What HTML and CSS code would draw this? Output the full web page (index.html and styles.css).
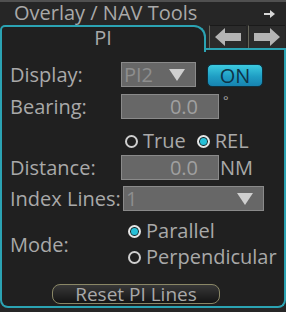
FILE: index.html
```html
<!DOCTYPE html>
<html lang="en">
<head>
    <meta charset="UTF-8">
    <title>Overlay / NAV Tools</title>
    <link rel="stylesheet" href="styles.css">
</head>
<body>
<div class="dialog">
    <div class="dialog__topline"></div>
    <div class="dialog__header">
        <span class="dialog__title">Overlay / NAV Tools</span>
        <svg class="dialog__more" width="11" height="8" viewBox="0 0 11 8">
            <path d="M0 3h6V0l5 4-5 4V5H0z" fill="#d8d8d8"/>
        </svg>
    </div>
    <div class="tabs">
        <div class="tab tab--active">PI</div>
        <div class="tabs__rest">
            <span class="tabs__btn">
                <svg width="26" height="18" viewBox="0 0 26 18"><path d="M0 9l10-9v5h16v8H10v5z" fill="#b4b4b4"/></svg>
            </span>
            <span class="tabs__btn">
                <svg width="26" height="18" viewBox="0 0 26 18"><path d="M26 9L16 0v5H0v8h16v5z" fill="#b4b4b4"/></svg>
            </span>
        </div>
    </div>
    <div class="panel">
        <div class="row row--display">
            <span class="row__label">Display:</span>
            <span class="select select--short">PI2<i class="select__arrow"></i></span>
            <span class="btn-on">ON</span>
        </div>
        <div class="row row--bearing">
            <span class="row__label">Bearing:</span>
            <span class="field">0.0</span>
            <span class="unit unit--deg">°</span>
        </div>
        <div class="row row--ref">
            <span class="radio"></span><span class="radio__text">True</span>
            <span class="radio radio--on"></span><span class="radio__text">REL</span>
        </div>
        <div class="row row--distance">
            <span class="row__label">Distance:</span>
            <span class="field">0.0</span>
            <span class="unit">NM</span>
        </div>
        <div class="row row--index">
            <span class="row__label">Index Lines:</span>
            <span class="select select--long">1<i class="select__arrow"></i></span>
        </div>
        <div class="row row--mode">
            <span class="row__label">Mode:</span>
            <div class="mode">
                <div class="mode__item"><span class="radio radio--on"></span><span class="radio__text">Parallel</span></div>
                <div class="mode__item"><span class="radio"></span><span class="radio__text">Perpendicular</span></div>
            </div>
        </div>
        <div class="row row--reset">
            <span class="btn-reset">Reset PI Lines</span>
        </div>
    </div>
</div>
</body>
</html>
```

FILE: styles.css
```css
html, body {
    margin: 0;
    padding: 0;
    background: #1c1c1c;
}
body {
    width: 286px;
    height: 312px;
    overflow: hidden;
    font-family: "Open Sans", "Noto Sans", sans-serif;
    color: #a9a9a9;
}
.dialog {
    width: 286px;
    height: 312px;
    background: #262626;
}
.dialog__topline {
    height: 2px;
    background: #505050;
}
.dialog__header {
    height: 23px;
    display: flex;
    align-items: center;
    justify-content: space-between;
    padding: 0 11px 0 14px;
}
.dialog__title {
    font-size: 20px;
    line-height: 23px;
    color: #a9a9a9;
    margin-top: -2px;
}
.dialog__more {
    display: block;
    margin-top: 1px;
}

.tabs {
    display: flex;
    height: 25px;
}
.tab {
    box-sizing: border-box;
    width: 206px;
    height: 27px;
    border: 2px solid #2ba3b3;
    border-bottom: none;
    border-radius: 5px 12px 0 0;
    background: #202020;
    text-align: center;
    font-size: 20px;
    line-height: 21px;
    color: #a9a9a9;
    position: relative;
    z-index: 1;
}
.tabs__rest {
    flex: 1;
    display: flex;
    gap: 2px;
    padding-left: 3px;
    border-bottom: 2px solid #2ba3b3;
}
.tabs__btn {
    box-sizing: border-box;
    width: 37px;
    height: 23px;
    display: flex;
    align-items: center;
    justify-content: center;
    background: #2b2b2b;
    border-left: 1px solid #66665a;
    border-top: 1px solid #1a1a1a;
}

.panel {
    box-sizing: border-box;
    height: 260px;
    margin-top: -2px;
    border: 2px solid #2ba3b3;
    border-top: none;
    border-radius: 0 0 8px 8px;
    background: #202020;
    padding-top: 14px;
}
.row {
    display: flex;
    align-items: center;
    font-size: 20px;
    padding-left: 8px;
}
.row__label {
    width: 111px;
    flex: none;
}
.row--display { height: 25px; }
.row--bearing { height: 25px; margin-top: 7px; }
.row--ref { height: 18px; margin-top: 13px; padding-left: 123px; }
.row--distance { height: 25px; margin-top: 5px; }
.row--index { height: 25px; margin-top: 6px; }
.row--mode { height: 48px; margin-top: 9px; }
.row--reset { height: 20px; margin-top: 16px; justify-content: center; padding-left: 0; padding-right: 14px; }

.select {
    box-sizing: border-box;
    height: 25px;
    display: flex;
    align-items: center;
    justify-content: space-between;
    background: #676767;
    border: 1px solid #8a8a8a;
    color: #8e8e8e;
    padding: 0 10px 0 2px;
    line-height: 23px;
}
.select--short { width: 75px; }
.select--long { width: 141px; margin-left: 2px; }
.select__arrow {
    width: 0;
    height: 0;
    border-left: 8px solid transparent;
    border-right: 8px solid transparent;
    border-top: 12px solid #cfcfcf;
}
.btn-on {
    box-sizing: border-box;
    width: 56px;
    height: 23px;
    margin-left: 11px;
    margin-top: 2px;
    border: 1px solid #0d3140;
    border-radius: 5px;
    background: linear-gradient(#3ccbe0, #1f9ec4 55%, #1783b0);
    color: #0f3347;
    text-align: center;
    line-height: 21px;
    font-size: 20px;
}
.field {
    box-sizing: border-box;
    width: 98px;
    height: 25px;
    background: #676767;
    border: 1px solid #8a8a8a;
    color: #a0a0a0;
    text-align: right;
    padding-right: 20px;
    line-height: 23px;
}
.unit {
    margin-left: 1px;
}
.unit--deg {
    align-self: flex-start;
    font-size: 13px;
    line-height: 13px;
    margin-left: 4px;
}

.radio {
    box-sizing: border-box;
    width: 13px;
    height: 13px;
    border: 2px solid #cfcfcf;
    border-radius: 50%;
    flex: none;
}
.radio--on {
    background: #25c0d8;
    border-color: #e6e6e6;
    box-shadow: inset 0 0 0 1px #1c1c1c;
}
.radio__text {
    margin-left: 5px;
    margin-right: 11px;
    line-height: 18px;
}
.mode {
    display: flex;
    flex-direction: column;
    gap: 4px;
    margin-left: 7px;
}
.mode__item {
    display: flex;
    align-items: center;
    height: 22px;
}

.btn-reset {
    box-sizing: border-box;
    width: 168px;
    height: 20px;
    border: 1px solid #8a8766;
    border-radius: 8px;
    background: linear-gradient(#383838, #141414);
    text-align: center;
    line-height: 18px;
    font-size: 19px;
    color: #a9a9a9;
}
```
